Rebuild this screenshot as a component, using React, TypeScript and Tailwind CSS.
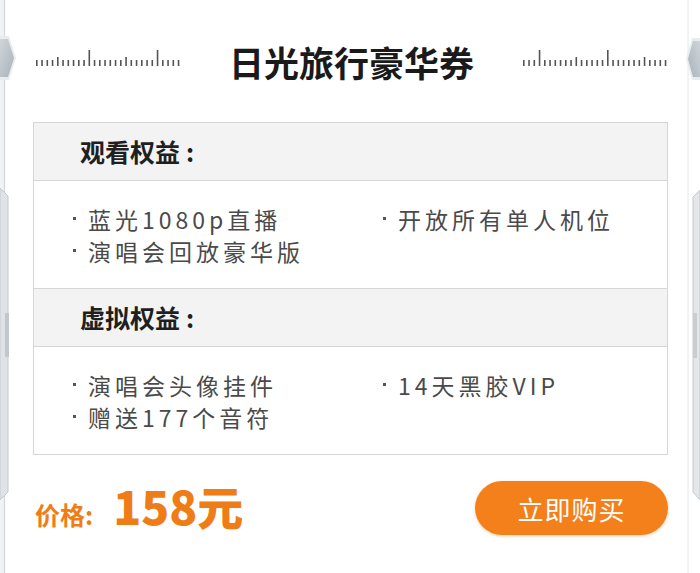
const font = { fontFamily: '"Noto Sans CJK SC", "Noto Sans", sans-serif' };

const leftTicks = { tall: [10, 23], mid: [4, 17] };
const rightTicks = { tall: [3, 16], mid: [10, 23] };

function Ruler({ tall, mid }: { tall: number[]; mid: number[] }) {
  const n = 28;
  return (
    <svg width="146" height="17" viewBox="0 0 146 17" className="mb-[10px]" aria-hidden>
      {Array.from({ length: n }).map((_, i) => {
        const h = tall.includes(i) ? 16 : mid.includes(i) ? 9 : 6;
        return <rect key={i} x={1 + i * 5.25} y={17 - h} width="1.6" height={h} fill="#555555" />;
      })}
    </svg>
  );
}

function LeftEdge() {
  return (
    <svg width="16" height="573" viewBox="0 0 16 573" className="shrink-0" aria-hidden>
      <defs>
        <linearGradient id="hexL" x1="0" y1="0" x2="1" y2="1">
          <stop offset="0" stopColor="#cfd5da" />
          <stop offset="1" stopColor="#a9b2ba" />
        </linearGradient>
      </defs>
      <rect x="0" y="0" width="4" height="573" fill="#f1f2f4" />
      <line x1="4.5" y1="0" x2="4.5" y2="573" stroke="#d3d7db" strokeWidth="1.2" />
      <polygon points="0,36 9,36 16,58 9,80 0,80" fill="#e9ecef" />
      <polygon points="0,39 8,39 14,58 8,77 0,77" fill="url(#hexL)" />
      <polygon points="0,188 8,196 8,492 0,500" fill="#dfe3e7" stroke="#c3c9ce" strokeWidth="1" />
      <rect x="5" y="313" width="4" height="44" fill="#c2c7cc" />
    </svg>
  );
}

function RightEdge() {
  return (
    <svg width="14" height="573" viewBox="0 0 14 573" className="shrink-0" aria-hidden>
      <defs>
        <linearGradient id="hexR" x1="1" y1="0" x2="0" y2="1">
          <stop offset="0" stopColor="#cfd5da" />
          <stop offset="1" stopColor="#a9b2ba" />
        </linearGradient>
      </defs>
      <line x1="2" y1="0" x2="2" y2="573" stroke="#e3e6e9" strokeWidth="1" />
      <polygon points="14,38 6,38 0,59 6,80 14,80" fill="#e9ecef" />
      <polygon points="14,41 7,41 2,59 7,77 14,77" fill="url(#hexR)" />
      <polygon points="14,190 7,197 7,492 14,500" fill="#e3e7ea" stroke="#c3c9ce" strokeWidth="1" />
      <rect x="7" y="313" width="4" height="45" fill="#c8cdd1" />
    </svg>
  );
}

function Item({ text }: { text: string }) {
  return (
    <span className="flex items-center text-[23px] leading-[32px] text-[#4a4a4a]">
      <span className="mr-[12px] h-[3px] w-[3px] shrink-0 bg-[#555555]" />
      <span className="tracking-[4px]">{text}</span>
    </span>
  );
}

function Section({ title, left, right }: { title: string; left: string[]; right: string[] }) {
  return (
    <>
      <div className="flex h-[57px] items-center bg-[#f3f3f3] pl-[46px]">
        <span className="text-[25px] font-bold text-[#1f1f1f]">{title}</span>
        <span className="ml-[6px] text-[25px] font-bold text-[#1f1f1f]">:</span>
      </div>
      <div className="flex h-[108px] items-center border-t border-[#d6d6d6] bg-white pl-[39px]">
        <div className="flex w-[310px] flex-col">
          {left.map((t) => (
            <Item key={t} text={t} />
          ))}
        </div>
        <div className="flex flex-col">
          {right.map((t) => (
            <Item key={t} text={t} />
          ))}
          <span className="h-[32px]" />
        </div>
      </div>
    </>
  );
}

export default function App() {
  return (
    <div className="flex h-[573px] w-[700px] overflow-hidden bg-white" style={font}>
      <LeftEdge />
      <div className="flex flex-1 flex-col pl-[17px] pr-[18px] pt-[37px]">
        <div className="flex h-[50px] items-center justify-between">
          <div className="ml-[2px]">
            <Ruler {...leftTicks} />
          </div>
          <h1 className="text-[35px] font-bold leading-[50px] text-[#1a1a1a]">日光旅行豪华券</h1>
          <Ruler {...rightTicks} />
        </div>

        <div className="mt-[35px] flex flex-col border border-[#d6d6d6]">
          <Section title="观看权益" left={["蓝光1080p直播", "演唱会回放豪华版"]} right={["开放所有单人机位"]} />
          <div className="border-t border-[#d6d6d6]">
            <Section title="虚拟权益" left={["演唱会头像挂件", "赠送177个音符"]} right={["14天黑胶VIP"]} />
          </div>
        </div>

        <div className="mt-[26px] flex h-[54px] items-center justify-between">
          <div className="ml-[2px] flex items-baseline text-[#ef7d17]">
            <span className="text-[25px] font-bold">价格:</span>
            <span className="ml-[20px] text-[46px] font-black leading-none">158元</span>
          </div>
          <button className="flex h-[54px] w-[193px] items-center justify-center rounded-full bg-[#f3801a] text-[26px] font-normal tracking-[1px] text-white shadow-[0_1px_3px_rgba(240,128,26,0.4)]">
            立即购买
          </button>
        </div>
      </div>
      <RightEdge />
    </div>
  );
}
